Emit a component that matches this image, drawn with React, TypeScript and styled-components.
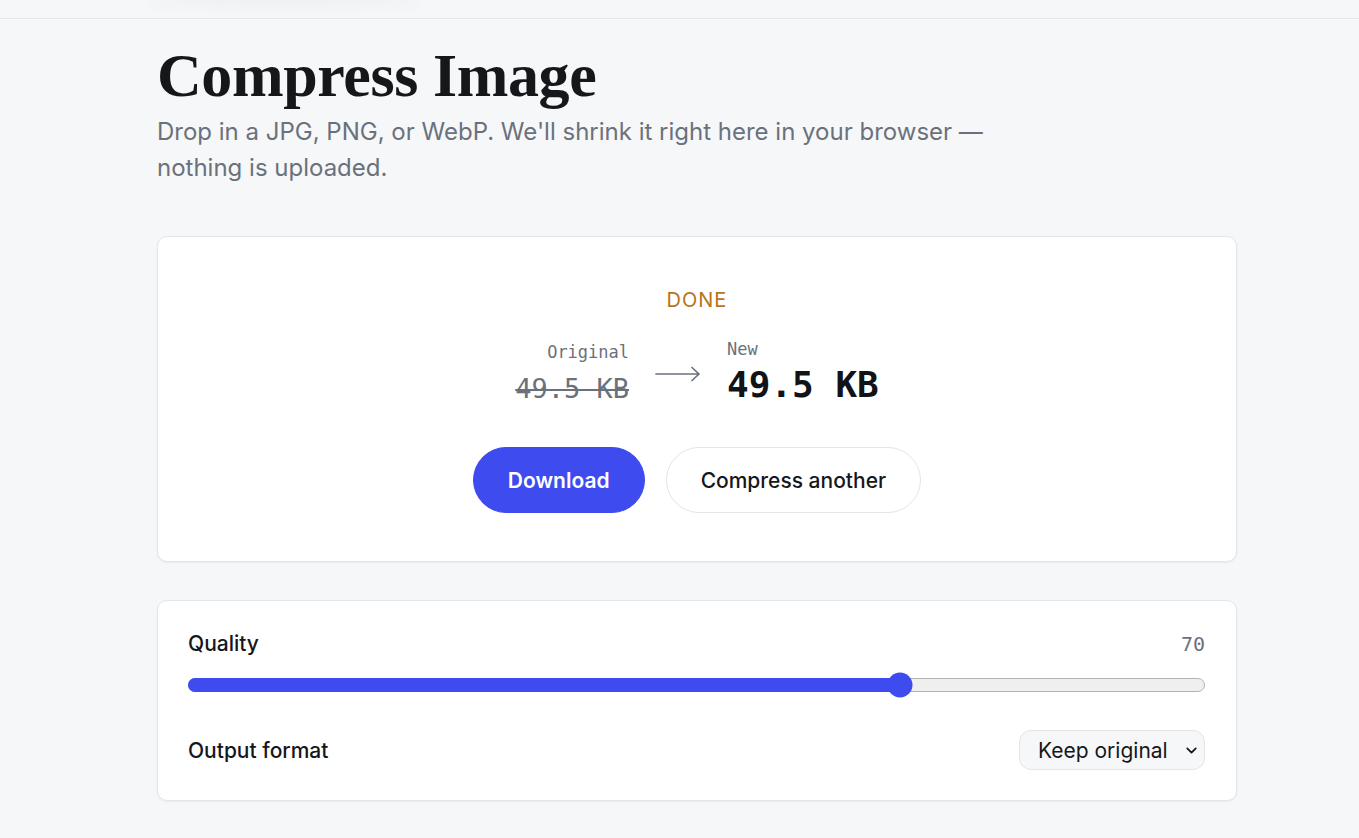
import React, { useState } from 'react';
import styled, { createGlobalStyle } from 'styled-components';
import { ChevronDown } from 'lucide-react';

const GlobalStyle = createGlobalStyle`
  html, body {
    margin: 0;
    padding: 0;
    background: #f6f7f9;
  }
  body {
    font-family: Inter, "Noto Sans", sans-serif;
    color: #15171b;
  }
  * { box-sizing: border-box; }
`;

const mono = `"DejaVu Sans Mono", "Liberation Mono", monospace`;

const TopBar = styled.header`
  height: 19px;
  border-bottom: 1px solid #e4e6ea;
  display: flex;
  align-items: flex-start;
  padding-left: 150px;
`;

const TopGlow = styled.div`
  width: 270px;
  height: 10px;
  margin-top: -4px;
  border-radius: 50%;
  background: #eceef1;
  filter: blur(6px);
`;

const Page = styled.main`
  max-width: 1237px;
  padding: 22px 0 36px 157px;
  display: flex;
  flex-direction: column;
`;

const Title = styled.h1`
  margin: 0;
  font-family: "Liberation Serif", "DejaVu Serif", serif;
  font-weight: 700;
  font-size: 62px;
  line-height: 68px;
  letter-spacing: -0.4px;
  color: #15171b;
`;

const Lede = styled.p`
  margin: 5px 0 0;
  max-width: 860px;
  font-size: 24px;
  line-height: 36px;
  color: #6b717c;
`;

const Card = styled.section<{ $pad: string }>`
  background: #fff;
  border: 1px solid #e3e5e9;
  border-radius: 10px;
  box-shadow: 0 1px 2px rgba(20, 24, 32, 0.05);
  padding: ${p => p.$pad};
`;

const ResultCard = styled(Card)`
  margin-top: 50px;
  display: flex;
  flex-direction: column;
  align-items: center;
`;

const Status = styled.div`
  font-size: 20px;
  letter-spacing: 1px;
  color: #b8741a;
  line-height: 24px;
`;

const Sizes = styled.div`
  margin-top: 26px;
  display: flex;
  align-items: flex-end;
  gap: 26px;
`;

const SizeCol = styled.div<{ $align: string }>`
  display: flex;
  flex-direction: column;
  align-items: ${p => p.$align};
`;

const SizeLabel = styled.span<{ $gap: number }>`
  font-family: ${mono};
  font-size: 17px;
  line-height: 22px;
  margin-bottom: ${p => p.$gap}px;
  color: #6b717c;
`;

const OldSize = styled.s`
  font-family: ${mono};
  font-size: 27px;
  line-height: 36px;
  color: #6b717c;
  text-decoration-thickness: 2px;
`;

const NewSize = styled.span`
  font-family: ${mono};
  font-size: 36px;
  font-weight: 700;
  line-height: 44px;
  color: #111317;
`;

const ArrowIcon = styled.svg`
  align-self: center;
  display: block;
  margin-top: 2px;
  color: #6b717c;
`;

const Actions = styled.div`
  margin-top: 40px;
  display: flex;
  gap: 21px;
`;

const Pill = styled.button<{ $primary?: boolean }>`
  height: 66px;
  padding: 0 34px;
  border-radius: 999px;
  font-family: Inter, sans-serif;
  font-size: 21px;
  font-weight: ${p => (p.$primary ? 600 : 500)};
  border: 1px solid ${p => (p.$primary ? '#3d4bef' : '#e3e5e9')};
  background: ${p => (p.$primary ? '#3d4bef' : '#fff')};
  color: ${p => (p.$primary ? '#fff' : '#15171b')};
  cursor: pointer;
`;

const SettingsCard = styled(Card)`
  margin-top: 38px;
  display: flex;
  flex-direction: column;
`;

const Row = styled.div`
  display: flex;
  align-items: center;
  justify-content: space-between;
`;

const FieldLabel = styled.span`
  font-size: 21px;
  font-weight: 500;
  color: #15171b;
`;

const Value = styled.span`
  font-family: ${mono};
  font-size: 20px;
  color: #6b717c;
`;

const Track = styled.div`
  position: relative;
  margin: 22px 0 38px;
  height: 14px;
  border-radius: 999px;
  background: #efefef;
  border: 1px solid #b3b3b3;
`;

const Fill = styled.div`
  margin: -1px 0 0 -1px;
  height: 14px;
  border-radius: 999px;
  background: #3d4bef;
`;

const Thumb = styled.div`
  position: absolute;
  top: 50%;
  width: 25px;
  height: 25px;
  border-radius: 50%;
  background: #3d4bef;
  transform: translate(-50%, -50%);
`;

const SelectWrap = styled.div`
  position: relative;
  display: flex;
  align-items: center;
`;

const Select = styled.select`
  appearance: none;
  height: 40px;
  padding: 0 36px 0 18px;
  border-radius: 12px;
  border: 1px solid #e3e5e9;
  background: #f6f7f9;
  font-family: Inter, sans-serif;
  font-size: 21px;
  color: #15171b;
`;

const Caret = styled(ChevronDown)`
  position: absolute;
  right: 5px;
  pointer-events: none;
  color: #15171b;
`;

const Arrow = () => (
  <ArrowIcon width="46" height="16" viewBox="0 0 46 16" fill="none">
    <path d="M1 8h43M37 1.5 44 8l-7 6.5" stroke="currentColor" strokeWidth="1.7" strokeLinecap="round" strokeLinejoin="round" />
  </ArrowIcon>
);

export default function App() {
  const [quality] = useState(70);

  return (
    <>
      <GlobalStyle />
      <TopBar>
        <TopGlow />
      </TopBar>
      <Page>
        <Title>Compress Image</Title>
        <Lede>
          Drop in a JPG, PNG, or WebP. We'll shrink it right here in your browser — nothing is uploaded.
        </Lede>

        <ResultCard $pad="51px 40px 48px">
          <Status>DONE</Status>
          <Sizes>
            <SizeCol $align="flex-end">
              <SizeLabel $gap={8}>Original</SizeLabel>
              <OldSize>49.5 KB</OldSize>
            </SizeCol>
            <Arrow />
            <SizeCol $align="flex-start">
              <SizeLabel $gap={3}>New</SizeLabel>
              <NewSize>49.5 KB</NewSize>
            </SizeCol>
          </Sizes>
          <Actions>
            <Pill $primary>Download</Pill>
            <Pill>Compress another</Pill>
          </Actions>
        </ResultCard>

        <SettingsCard $pad="30px 31px 30px 30px">
          <Row>
            <FieldLabel>Quality</FieldLabel>
            <Value>{quality}</Value>
          </Row>
          <Track>
            <Fill style={{ width: `${quality}%` }} />
            <Thumb style={{ left: `${quality}%` }} />
          </Track>
          <Row>
            <FieldLabel>Output format</FieldLabel>
            <SelectWrap>
              <Select defaultValue="keep">
                <option value="keep">Keep original</option>
                <option value="jpeg">JPEG</option>
                <option value="png">PNG</option>
                <option value="webp">WebP</option>
              </Select>
              <Caret size={17} strokeWidth={2.5} />
            </SelectWrap>
          </Row>
        </SettingsCard>
      </Page>
    </>
  );
}
